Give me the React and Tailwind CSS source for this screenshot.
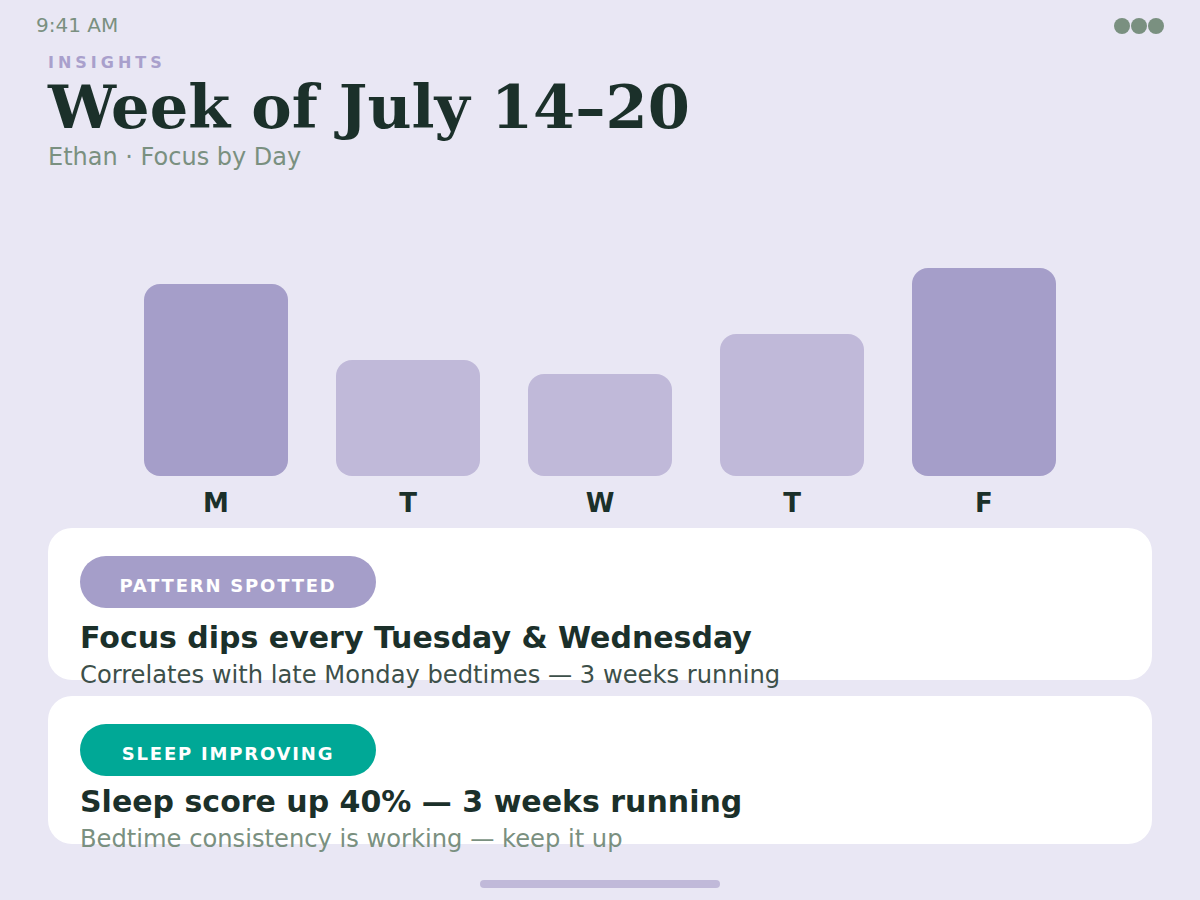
const bars = [
  { day: 'M', h: 192, strong: true },
  { day: 'T', h: 116, strong: false },
  { day: 'W', h: 102, strong: false },
  { day: 'T', h: 142, strong: false },
  { day: 'F', h: 208, strong: true },
];

function Card({ badge, badgeClass, title, sub, subClass, height, titleGap }) {
  return (
    <div className={`rounded-[24px] bg-white px-8 pt-7 ${height}`}>
      <div className={`flex h-[52px] w-[296px] items-center justify-center rounded-full pt-[7px] text-[18px] font-bold uppercase leading-[18px] tracking-[1.8px] text-white ${badgeClass}`}>
        {badge}
      </div>
      <p className={`${titleGap} whitespace-nowrap text-[30px] font-bold leading-[36px] text-[#1b302a]`}>{title}</p>
      <p className={`mt-[5px] whitespace-nowrap text-[24.2px] leading-[28px] ${subClass}`}>{sub}</p>
    </div>
  );
}

export default function App() {
  return (
    <div className="flex h-[900px] w-[1200px] flex-col overflow-hidden bg-[#e9e7f4] font-['DejaVu_Sans',sans-serif]">
      <div className="flex h-[50px] items-center justify-between px-9">
        <span className="text-[20px] leading-none text-[#7a9080]">9:41 AM</span>
        <div className="mt-[2px] flex gap-[1px]">
          <span className="h-4 w-4 rounded-full bg-[#7a9080]" />
          <span className="h-4 w-4 rounded-full bg-[#7a9080]" />
          <span className="h-4 w-4 rounded-full bg-[#7a9080]" />
        </div>
      </div>

      <div className="px-12">
        <p className="mt-[3px] text-[16px] font-bold leading-[20px] tracking-[0.25em] text-[#a9a0cc]">INSIGHTS</p>
        <h1 className="mt-[4px] whitespace-nowrap font-['DejaVu_Serif',serif] text-[60.6px] font-bold leading-[60px] text-[#1b302a]">
          Week of July 14–20
        </h1>
        <p className="mt-[6px] text-[24px] leading-[28px] text-[#7a9080]">Ethan · Focus by Day</p>

        <div className="mt-[97px] flex h-[208px] items-end justify-center gap-12">
          {bars.map((b, i) => (
            <div
              key={i}
              className={`w-36 rounded-2xl ${b.strong ? 'bg-[#a59ec9]' : 'bg-[#c0b9d9]'}`}
              style={{ height: b.h }}
            />
          ))}
        </div>
        <div className="mt-3 flex justify-center gap-12">
          {bars.map((b, i) => (
            <span key={i} className="w-36 text-center text-[26px] font-bold leading-[30px] text-[#1b302a]">
              {b.day}
            </span>
          ))}
        </div>

        <div className="mt-[10px] flex flex-col gap-4">
          <Card
            badge="Pattern spotted"
            badgeClass="bg-[#a59ec9]"
            title="Focus dips every Tuesday & Wednesday"
            sub="Correlates with late Monday bedtimes — 3 weeks running"
            subClass="text-[#3d504a]"
            height="h-[152px]"
            titleGap="mt-3"
          />
          <Card
            badge="Sleep improving"
            badgeClass="bg-[#00a896]"
            title="Sleep score up 40% — 3 weeks running"
            sub="Bedtime consistency is working — keep it up"
            subClass="text-[#7a9080]"
            height="h-[148px]"
            titleGap="mt-2"
          />
        </div>
      </div>

      <div className="mx-auto mt-9 h-2 w-60 rounded-full bg-[#c0b9d9]" />
    </div>
  );
}
